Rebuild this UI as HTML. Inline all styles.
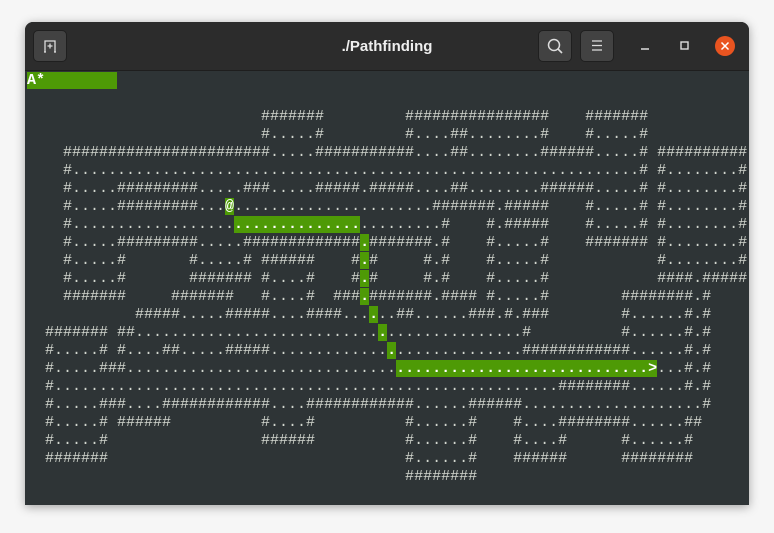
<!DOCTYPE html>
<html><head><meta charset="utf-8"><style>
html,body{margin:0;padding:0;background:#f6f6f6;width:774px;height:533px;overflow:hidden}
.win{position:absolute;left:25px;top:22px;width:724px;height:483px;border-radius:8px 8px 0 0;background:#2e3436;box-shadow:0 2px 10px rgba(0,0,0,.35);overflow:hidden}
.tb{position:absolute;left:0;top:0;width:724px;height:48px;background:#2c2c2c;border-bottom:1px solid #1e1e1e}
.btn{position:absolute;top:8px;width:34px;height:32px;border-radius:5px;background:#424242;border:1px solid #1f1f1f;box-sizing:border-box}
.title{position:absolute;left:0;width:724px;top:16px;text-align:center;color:#eee;font:bold 15px "Liberation Sans",sans-serif}
pre{position:absolute;left:2px;top:50px;margin:0;font:15px/18px "Liberation Mono",monospace;color:#d3d7cf}
.g{background:#4e9a06;color:#fff;font-weight:bold}
</style></head><body>
<div class="win">
<div class="tb">
<div class="btn" style="left:8px"><svg width="32" height="30" viewBox="0 0 32 30"><path d="M11 21V10h10v11M13.5 15h5M16 12.5v5M10 21h2M20 21h2" stroke="#ddd" stroke-width="1.3" fill="none"/></svg></div>
<div class="title">./Pathfinding</div>
<div class="btn" style="left:513px"><svg width="32" height="30" viewBox="0 0 32 30"><circle cx="15" cy="14" r="5.5" stroke="#ddd" stroke-width="1.5" fill="none"/><path d="M19 18l4 4" stroke="#ddd" stroke-width="1.6"/></svg></div>
<div class="btn" style="left:555px"><svg width="32" height="30" viewBox="0 0 32 30"><path d="M11 10h10M11 14.5h10M11 19h10" stroke="#ddd" stroke-width="1.3"/></svg></div>
<svg style="position:absolute;left:610px;top:14px" width="110" height="22" viewBox="0 0 110 22"><path d="M6 13h8" stroke="#ddd" stroke-width="1.4"/><rect x="46" y="6" width="7" height="7" stroke="#ddd" stroke-width="1.4" fill="none"/><circle cx="90" cy="10" r="10" fill="#e95420"/><path d="M86.5 6.5l7 7M93.5 6.5l-7 7" stroke="#fff" stroke-width="1.5"/></svg>
</div>
<pre><span class="g">A*        </span>

                          #######         ################    #######
                          #.....#         #....##........#    #.....#
    #######################.....###########....##........######.....# ##########
    #...............................................................# #........#
    #.....#########.....###.....#####.#####....##........######.....# #........#
    #.....#########...<span class="g">@</span>......................#######.#####    #.....# #........#
    #..................<span class="g">..............</span>.........#    #.#####    #.....# #........#
    #.....#########.....#############<span class="g">.</span>#######.#    #.....#    ####### #........#
    #.....#       #.....# ######    #<span class="g">.</span>#     #.#    #.....#            #........#
    #.....#       ####### #....#    #<span class="g">.</span>#     #.#    #.....#            ####.#####
    #######     #######   #....#  ###<span class="g">.</span>#######.#### #.....#        ########.#
            #####.....#####....####...<span class="g">.</span>..##......###.#.###        #......#.#
  ####### ##...........................<span class="g">.</span>...............#          #......#.#
  #.....# #....##.....#####.............<span class="g">.</span>..............############......#.#
  #.....###..............................<span class="g">............................&gt;</span>...#.#
  #........................................................########......#.#
  #.....###....############....############......######....................#
  #.....# ######          #....#          #......#    #....########......##
  #.....#                 ######          #......#    #....#      #......#
  #######                                 #......#    ######      ########
                                          ########
</pre>
</div>
</body></html>
